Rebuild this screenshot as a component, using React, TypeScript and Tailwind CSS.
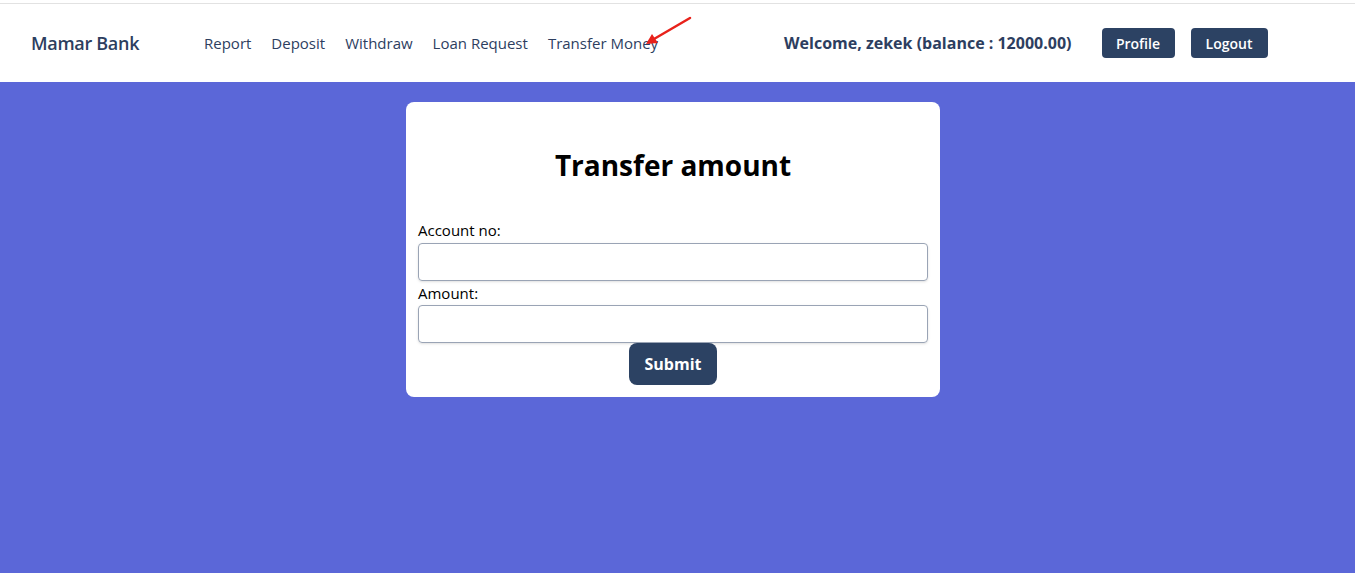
import React from 'react';

const links = ['Report', 'Deposit', 'Withdraw', 'Loan Request', 'Transfer Money'];

export default function App() {
  return (
    <div className="min-h-screen bg-[#5b67d8] font-['Open_Sans',sans-serif]">
      <div className="h-[3px] bg-white"></div>
      <div className="h-px bg-[#e2e2e2]"></div>
      {/* Navbar */}
      <nav className="relative flex h-[78px] items-center bg-white pl-[31px] text-[#2d3e5f]">
        <div className="w-[173px] text-[18px] font-semibold tracking-[-0.3px]">Mamar Bank</div>
        <ul className="flex gap-[20px] text-[15px]">
          {links.map((l) => (
            <li key={l}>{l}</li>
          ))}
        </ul>
        <div className="ml-[126px] text-[16px] font-bold">Welcome, zekek (balance : 12000.00)</div>
        <button className="ml-[30px] h-[30px] w-[73px] rounded bg-[#2c4263] text-[14px] font-semibold text-white">Profile</button>
        <button className="ml-[16px] h-[30px] w-[77px] rounded bg-[#2c4263] text-[14px] font-semibold text-white">Logout</button>
        {/* red annotation arrow */}
        <svg className="absolute left-[640px] top-[12px]" width="56" height="34" viewBox="0 0 56 34">
          <line x1="50" y1="2" x2="14" y2="23" stroke="#e8221b" strokeWidth="2.5" strokeLinecap="round" />
          <polygon points="6,28 12,18 18,27" fill="#e8221b" />
        </svg>
      </nav>
      {/* Card */}
      <div className="flex justify-center pr-[9px] pt-[20px]">
        <div className="w-[534px] rounded-lg bg-white px-[12px] pb-[12px] pt-[42px]">
          <h1 className="text-center text-[28px] font-bold text-black">Transfer amount</h1>
          <form className="mt-[33px] flex flex-col text-[15px] text-black">
            <label>Account no:</label>
            <input className="mt-[1px] h-[38px] rounded border border-[#9aa4b5] shadow-sm" />
            <label className="mt-[1px]">Amount:</label>
            <input className="mt-[1px] h-[38px] rounded border border-[#9aa4b5] shadow-sm" />
            <button type="button" className="mx-auto h-[42px] w-[88px] rounded-lg bg-[#2c4263] text-[16px] font-bold text-white">Submit</button>
          </form>
        </div>
      </div>
    </div>
  );
}
